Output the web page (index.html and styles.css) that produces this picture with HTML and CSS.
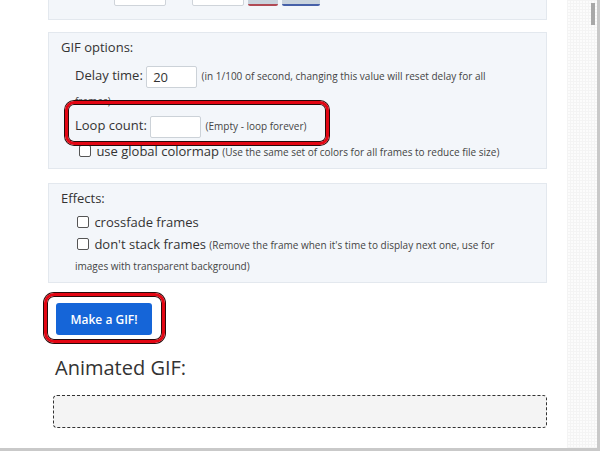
FILE: index.html
```html
<!DOCTYPE html>
<html lang="en">
<head>
  <meta charset="UTF-8">
  <title>Make a GIF</title>
  <meta name="viewport" content="width=device-width, initial-scale=1.0">
  <link rel="stylesheet" href="styles.css">
</head>
<body>

  <div class="window">
    <main class="content">

      <section class="panel panel-top">
        <div class="top-row">
          <span class="field field-a"></span>
          <span class="field field-b"></span>
          <span class="mini-btn mini-red"></span>
          <span class="mini-btn mini-blue"></span>
        </div>
      </section>

      <section class="panel panel-gif">
        <div class="panel-title">GIF options:</div>
        <div class="opt">
          <label>Delay time:</label>
          <input class="num" type="text" value="20">
          <small>(in 1/100 of second, changing this value will reset delay for all frames)</small>
        </div>
        <div class="opt">
          <span class="mark">
            <label>Loop count:</label>
            <input class="num" type="text" value="">
            <small>(Empty - loop forever)</small>
          </span>
        </div>
        <div class="check check-gif">
          <label><input type="checkbox"> use global colormap</label>
          <small>(Use the same set of colors for all frames to reduce file size)</small>
        </div>
      </section>

      <section class="panel panel-effects">
        <div class="panel-title">Effects:</div>
        <div class="check check-effects">
          <label><input type="checkbox"> crossfade frames</label>
        </div>
        <div class="check check-effects">
          <label><input type="checkbox"> don't stack frames</label>
          <small>(Remove the frame when it's time to display next one, use for images with transparent background)</small>
        </div>
      </section>

      <div class="actions">
        <span class="mark mark-btn">
          <button type="button">Make a GIF!</button>
        </span>
      </div>

      <h2>Animated GIF:</h2>
      <div class="output"></div>

    </main>
    <div class="scrollbar"><div class="thumb"></div></div>
  </div>

</body>
</html>
```

FILE: styles.css
```css
body {
  margin: 0;
  font-family: "Open Sans", "Noto Sans", Arial, sans-serif;
  color: #333;
  background: #fff;
}

.window {
  display: flex;
  width: 597px;
  height: 448px;
  overflow: hidden;
  border-right: 3px solid #c9c9c9;
  border-bottom: 3px solid #c9c9c9;
}

.content {
  flex: 1;
  padding-left: 48px;
  padding-right: 20px;
}

.panel {
  width: 499px;
  box-sizing: border-box;
  background: #f3f6fa;
  border: 1px solid #e3e8ee;
  padding: 4px 26px 6px 12px;
  margin-bottom: 12px;
  font-size: 13px;
}

.panel-gif {
  padding-bottom: 5px;
  margin-bottom: 14px;
}

.panel-top {
  margin-top: -20px;
  height: 40px;
  padding: 0;
}

.top-row {
  display: flex;
  align-items: flex-end;
  height: 25px;
  padding-left: 65px;
}

.field {
  width: 50px;
  height: 24px;
  background: #fff;
  border: 1px solid #cfd4da;
  border-radius: 2px;
}

.field-b {
  margin-left: 26px;
}

.mini-btn {
  height: 24px;
  border-radius: 2px;
  margin-left: 4px;
}

.mini-red {
  width: 30px;
  background: #c9d3dd;
  border-bottom: 2px solid #b04a55;
}

.mini-blue {
  width: 38px;
  background: #c9d3dd;
  border-bottom: 2px solid #4660a8;
}

.panel-title {
  line-height: 20px;
  margin-bottom: 6px;
}

.panel-effects .panel-title {
  margin-bottom: 4px;
}

.opt {
  padding-left: 14px;
  line-height: 24px;
}

.num {
  width: 51px;
  height: 22px;
  box-sizing: border-box;
  border: 1px solid #ccd2d8;
  border-radius: 2px;
  padding: 0 6px;
  font: 13px "Open Sans", Arial, sans-serif;
  color: #333;
  vertical-align: middle;
  margin-right: 1px;
}

small {
  font-size: 10px;
  color: #444;
}

.mark {
  position: relative;
  display: inline-block;
}

.mark::after {
  content: "";
  position: absolute;
  left: -10px;
  right: -23px;
  top: -12px;
  bottom: -7px;
  border: 3px solid #e30613;
  border-radius: 9px;
  box-shadow: 0 0 0 1px #2a0a0a, inset 0 0 0 1px #2a0a0a;
}

.check {
  padding-left: 14px;
  line-height: 21px;
}

.check-gif {
  margin-top: 3px;
}

.check-effects {
  line-height: 20px;
}

.check-effects + .check-effects {
  margin-top: 2px;
}

.check label {
  font-size: 13px;
}

.check input[type="checkbox"] {
  appearance: none;
  width: 12px;
  height: 12px;
  margin: 0 2px 0 4px;
  border: 1px solid #555;
  border-radius: 2px;
  background: #fff;
  vertical-align: -1px;
}

.check-effects input[type="checkbox"] {
  margin-left: 2px;
}

.actions {
  padding: 8px 0 0 8px;
}

button {
  width: 96px;
  height: 32px;
  background: #1565d8;
  color: #fff;
  border: none;
  border-radius: 3px;
  font: 600 12px "Open Sans", Arial, sans-serif;
}

.mark-btn::after {
  left: -12px;
  right: -13px;
  top: -10px;
  bottom: -8px;
  border-radius: 10px;
}

h2 {
  font-weight: 400;
  font-size: 20px;
  margin: 20px 0 14px 7px;
  color: #333;
  line-height: 26px;
}

.output {
  width: 492px;
  height: 31px;
  margin-left: 5px;
  background: #f4f4f4;
  border: 1px dashed #333;
  border-radius: 4px;
}

.scrollbar {
  width: 30px;
  background-color: #fcfcfc;
  background-image: linear-gradient(#f4f4f4 1px, transparent 1px), linear-gradient(90deg, #f4f4f4 1px, transparent 1px);
  background-size: 3px 3px;
}

.thumb {
  width: 4px;
  height: 22px;
  margin: 3px 2px 0 auto;
  background: #a8a8a8;
}
```
